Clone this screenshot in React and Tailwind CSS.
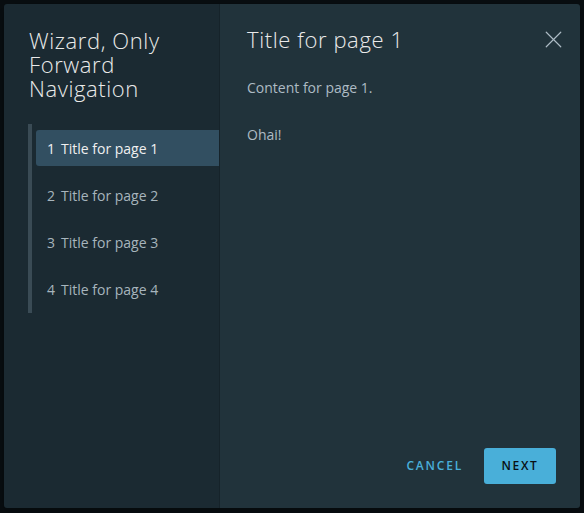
import React from "react";
import { X } from "lucide-react";

const steps = ["Title for page 1", "Title for page 2", "Title for page 3", "Title for page 4"];

export default function App() {
  return (
    <div
      className="w-[584px] h-[513px] bg-[#080d10] p-1"
      style={{ fontFamily: "'Open Sans', Lato, sans-serif" }}
    >
      <div className="flex h-[504px] w-[576px] rounded-[3px] overflow-hidden shadow-lg">
        {/* Step nav */}
        <div className="w-[216px] shrink-0 bg-[#1b2a32] border-r border-[#16232a] pt-6 pl-6">
          <h1 className="ml-px w-[175px] text-[22px] tracking-[0.6px] leading-6 font-light text-[#eaeaea]">
            Wizard, Only Forward Navigation
          </h1>
          <div className="mt-6 border-l-4 border-[#3a4b55] pl-1 py-[6px] flex flex-col gap-[11px]">
            {steps.map((s, i) => (
              <div
                key={s}
                className={
                  i === 0
                    ? "h-9 flex items-center pl-[11px] rounded-l-[3px] bg-[#324f61] text-[14px] text-[#f0f0f0]"
                    : "h-9 flex items-center pl-[11px] text-[14px] text-[#a7b5bd]"
                }
              >
                <span className="mr-[6px]">{i + 1}</span>
                {s}
              </div>
            ))}
          </div>
        </div>

        {/* Content */}
        <div className="flex-1 bg-[#21333b] flex flex-col pt-6 pl-[27px] pr-[15px] pb-6">
          <div className="flex items-center justify-between h-6 -mr-[3px] -mt-px">
            <h2 className="text-[22px] tracking-[0.6px] font-light text-[#eaeaea] leading-6">Title for page 1</h2>
            <X size={29} strokeWidth={1} className="text-[#adbbc4]" />
          </div>
          <p className="mt-[25px] text-[14px] text-[#adbbc4] leading-6">Content for page 1.</p>
          <p className="mt-[23px] text-[14px] text-[#adbbc4] leading-6">Ohai!</p>
          <div className="mt-auto flex items-center justify-end gap-[21px] pr-[9px]">
            <button className="text-[12px] tracking-[0.15em] font-semibold text-[#49afd9] uppercase">
              Cancel
            </button>
            <button className="w-[72px] h-9 rounded-[3px] bg-[#49afd9] text-[12px] tracking-[0.14em] font-semibold text-[#0a1014] uppercase">
              Next
            </button>
          </div>
        </div>
      </div>
    </div>
  );
}
